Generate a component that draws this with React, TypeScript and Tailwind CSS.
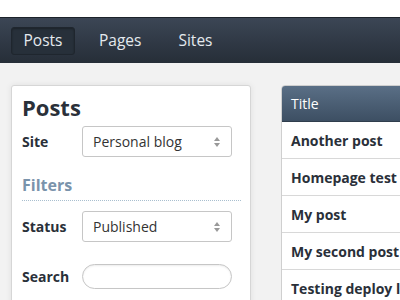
import React from "react";

const Arrows = () => (
  <svg width="8" height="12" viewBox="0 0 8 12" className="absolute right-[10px] top-1/2 -translate-y-1/2">
    <path d="M4 1 L7 5 L1 5 Z" fill="#999" />
    <path d="M4 11 L7 7 L1 7 Z" fill="#999" />
  </svg>
);

const Select = ({ value }: { value: string }) => (
  <div className="relative w-[150px] h-[31px] border border-[#c6c6c6] rounded-[3px] bg-white flex items-center pl-[10px] text-[14px] text-[#333]">
    {value}
    <Arrows />
  </div>
);

export default function App() {
  const rows = ["Another post", "Homepage test", "My post", "My second post", "Testing deploy link"];
  return (
    <div className="w-[400px] h-[300px] overflow-hidden bg-[#f2f2f2]" style={{ fontFamily: '"Open Sans", sans-serif' }}>
      <div className="h-[17px] bg-white" />
      <div className="h-[46px] border-t border-[#1c222a] bg-gradient-to-b from-[#3c4655] to-[#262e38] flex items-center pl-[11px] text-[15.5px] text-[#e4e9ee]">
        <div className="h-[28px] w-[64px] flex items-center justify-center rounded-[3px] bg-[#27303a] border border-[#1f262e] shadow-[inset_0_1px_2px_rgba(0,0,0,0.3)]">Posts</div>
        <div className="ml-[24px]">Pages</div>
        <div className="ml-[37px]">Sites</div>
      </div>
      <div className="flex pt-[22px] pl-[11px]">
        <div className="w-[240px] h-[240px] bg-white border border-[#d6d6d6] rounded-[3px] shadow-[0_0_6px_rgba(0,0,0,0.08)] pl-[10px] pr-[10px] shrink-0">
          <div className="text-[22px] font-bold text-[#2a3039] leading-[28px] mt-[7px]">Posts</div>
          <div className="flex items-center mt-[5px]">
            <div className="w-[60px] text-[14px] font-bold text-[#2a3039]">Site</div>
            <Select value="Personal blog" />
          </div>
          <div className="text-[16px] font-bold text-[#7a93ab] mt-[16px] leading-[24px]">Filters</div>
          <div className="border-b border-dotted border-[#a9bfcf] mt-[3px] mr-[-1px]" />
          <div className="flex items-center mt-[10px]">
            <div className="w-[60px] text-[14px] font-bold text-[#2a3039]">Status</div>
            <Select value="Published" />
          </div>
          <div className="flex items-center mt-[22px]">
            <div className="w-[60px] text-[14px] font-bold text-[#2a3039]">Search</div>
            <div className="w-[150px] h-[25px] border border-[#c6c6c6] rounded-full bg-white shadow-[inset_0_1px_2px_rgba(0,0,0,0.08)]" />
          </div>
        </div>
        <div className="ml-[30px] w-[160px] shrink-0 bg-white border border-[#cfcfcf] rounded-tl-[4px] overflow-hidden">
          <div className="h-[36px] bg-gradient-to-b from-[#5a6f86] to-[#3d4f63] text-white text-[14px] flex items-center pl-[9px] border-b border-[#2f3d4c]">Title</div>
          {rows.map((r) => (
            <div key={r} className="h-[37px] border-b border-[#d8d8d8] flex items-center pl-[9px] text-[14px] font-bold text-[#2a3039] whitespace-nowrap">{r}</div>
          ))}
        </div>
      </div>
    </div>
  );
}
